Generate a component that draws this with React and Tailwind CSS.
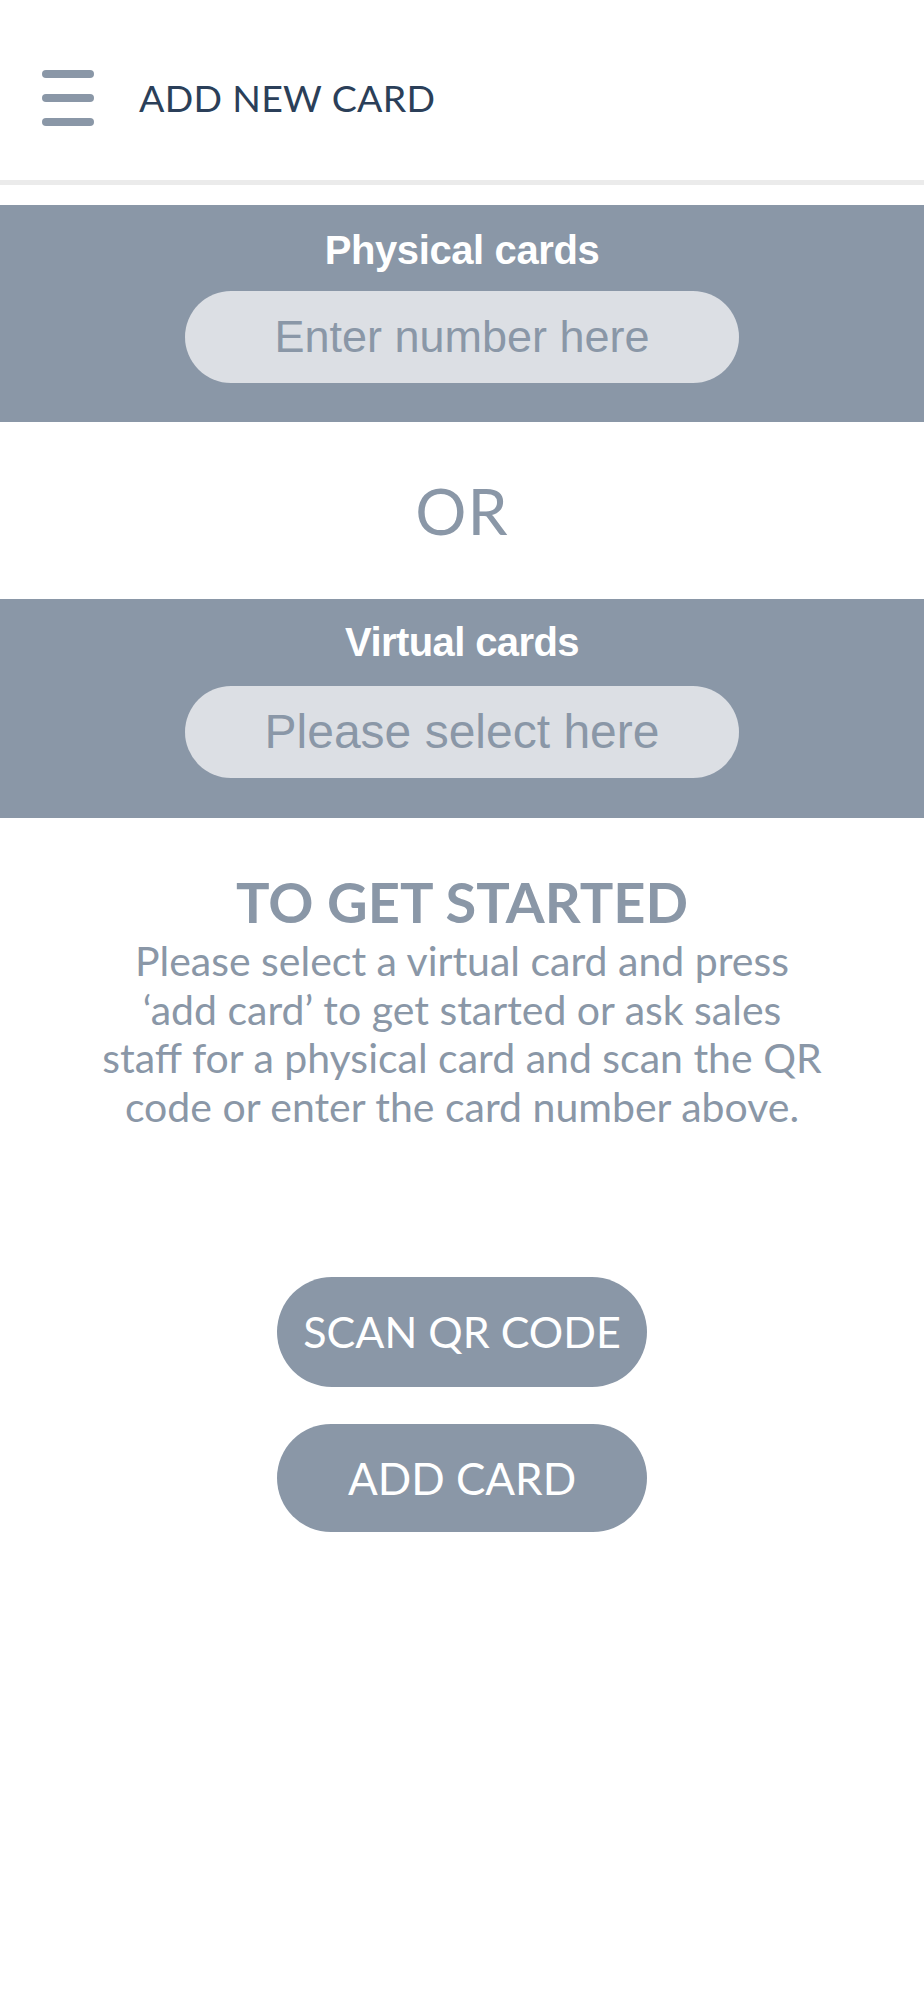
export default function App() {
    return (
        <div className="min-h-[2000px] bg-white font-['Lato','Liberation_Sans',sans-serif]">
            {/* Header */}
            <header className="h-[180px] flex items-center pt-[16px] pl-[42px]">
                <div className="flex flex-col gap-[16px]">
                    <span className="block w-[52px] h-[8px] rounded-full bg-[#8a97a7] blur-[0.6px]"></span>
                    <span className="block w-[52px] h-[8px] rounded-full bg-[#8a97a7] blur-[0.6px]"></span>
                    <span className="block w-[52px] h-[8px] rounded-full bg-[#8a97a7] blur-[0.6px]"></span>
                </div>
                <h1 className="ml-[45px] text-[37.5px] font-normal tracking-[0.3px] text-[#2b3f59]">ADD NEW CARD</h1>
            </header>
            <div className="h-[5px] bg-[#ebebeb]"></div>

            {/* Physical cards */}
            <section className="mt-[20px] bg-[#8a97a7] h-[217px] flex flex-col items-center pt-[21px]">
                <h2 className="text-[40px] font-bold text-white leading-[48px] tracking-[-0.4px] font-['Liberation_Sans',sans-serif]">Physical cards</h2>
                <div className="mt-[17px] w-[554px] h-[92px] rounded-full bg-[#dcdfe4] flex items-center justify-center">
                    <span className="text-[45px] text-[#8a97a7] font-['Liberation_Sans',sans-serif]">Enter number here</span>
                </div>
            </section>

            {/* OR */}
            <div className="h-[177px] flex items-center justify-center">
                <span className="text-[64px] font-normal tracking-[1px] text-[#8a97a7]">OR</span>
            </div>

            {/* Virtual cards */}
            <section className="bg-[#8a97a7] h-[219px] flex flex-col items-center pt-[19px]">
                <h2 className="text-[40px] font-bold text-white leading-[48px] tracking-[-0.6px] font-['Liberation_Sans',sans-serif]">Virtual cards</h2>
                <div className="mt-[20px] w-[554px] h-[92px] rounded-full bg-[#dcdfe4] flex items-center justify-center">
                    <span className="text-[48px] text-[#8a97a7] font-['Liberation_Sans',sans-serif]">Please select here</span>
                </div>
            </section>

            {/* Info */}
            <div className="flex flex-col items-center pt-[55px] text-[#8a97a7]">
                <h3 className="text-[56px] font-bold leading-[58px]">TO GET STARTED</h3>
                <p className="w-[880px] text-center text-[41px] leading-[48.5px] mt-[6px]">
                    Please select a virtual card and press<br />
                    ‘add card’ to get started or ask sales<br />
                    staff for a physical card and scan the QR<br />
                    code or enter the card number above.
                </p>
            </div>

            {/* Buttons */}
            <div className="flex flex-col items-center gap-[37px] mt-[146px]">
                <button className="w-[370px] h-[110px] rounded-[55px] bg-[#8a97a7] text-white text-[43px]">SCAN QR CODE</button>
                <button className="w-[370px] h-[108px] rounded-[54px] bg-[#8a97a7] text-white text-[44px]">ADD CARD</button>
            </div>
        </div>
    );
}
